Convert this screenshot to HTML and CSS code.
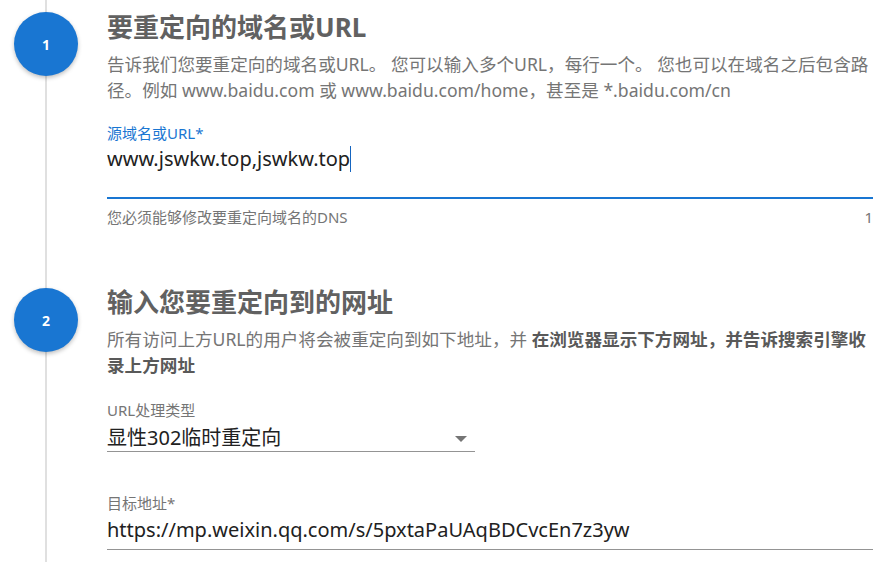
FILE: index.html
```html
<!DOCTYPE html>
<html>
<head>
  <meta charset="UTF-8">
  <title>域名重定向</title>
  <link rel="stylesheet" href="styles.css">
</head>
<body>

  <div class="stepper">

    <!-- Langkah 1 -->
    <div class="step step-first">
      <div class="rail"><div class="step-num">1</div></div>
      <div class="step-body">
        <h2 class="step-title">要重定向的域名或URL</h2>
        <p class="step-desc">告诉我们您要重定向的域名或URL。 您可以输入多个URL，每行一个。 您也可以在域名之后包含路径。例如 www.baidu.com 或 www.baidu.com/home，甚至是 *.baidu.com/cn</p>

        <div class="field field-focus">
          <label class="field-label">源域名或URL*</label>
          <div class="field-input field-area">www.jswkw.top,jswkw.top<span class="caret"></span></div>
        </div>
        <div class="field-hint">
          <span>您必须能够修改要重定向域名的DNS</span>
          <span>1</span>
        </div>
      </div>
    </div>

    <!-- Langkah 2 -->
    <div class="step step-last">
      <div class="rail"><div class="step-num">2</div></div>
      <div class="step-body">
        <h2 class="step-title">输入您要重定向到的网址</h2>
        <p class="step-desc">所有访问上方URL的用户将会被重定向到如下地址，并 <b>在浏览器显示下方网址，并告诉搜索引擎收录上方网址</b></p>

        <div class="field field-select">
          <label class="field-label">URL处理类型</label>
          <div class="field-input">显性302临时重定向<span class="arrow"></span></div>
        </div>

        <div class="field field-target">
          <label class="field-label">目标地址*</label>
          <div class="field-input">https://mp.weixin.qq.com/s/5pxtaPaUAqBDCvcEn7z3yw</div>
        </div>
      </div>
    </div>

  </div>

</body>
</html>
```

FILE: styles.css
```css
body {
  margin: 0;
  background: #fff;
  font-family: "Noto Sans", "Noto Sans CJK SC", sans-serif;
  overflow: hidden;
}

.stepper {
  display: flex;
  flex-direction: column;
  gap: 57px;
}

.step {
  display: flex;
}

.step-first {
  padding-top: 9px;
}

.rail {
  width: 107px;
  flex-shrink: 0;
  display: flex;
  align-items: flex-start;
  background: linear-gradient(#e0e0e0, #e0e0e0) no-repeat 45px 0 / 2px 100%;
  margin-top: -57px;
  padding-top: 61px;
}

.step-first .rail {
  margin-top: -9px;
  padding-top: 12px;
}

.step-num {
  width: 64px;
  height: 64px;
  margin-left: 14px;
  border-radius: 50%;
  background: #1976d2;
  color: #fff;
  font-weight: bold;
  font-size: 14px;
  display: flex;
  align-items: center;
  justify-content: center;
  box-shadow: 0 2px 4px rgba(0,0,0,0.25);
}

.step-body {
  flex: 1;
  padding-right: 22px;
}

.step-last .step-body {
  padding-bottom: 40px;
}

.step-title {
  margin: 0;
  font-size: 26px;
  line-height: 36px;
  font-weight: bold;
  color: #616161;
}

.step-desc {
  margin: 6px 0 0;
  font-size: 17.6px;
  line-height: 26px;
  color: #757575;
}

.step-desc b {
  color: #595959;
}

.field {
  margin-top: 21px;
}

.field-label {
  display: block;
  font-size: 15px;
  line-height: 18px;
  color: #757575;
}

.field-focus .field-label {
  color: #1976d2;
}

.field-input {
  position: relative;
  font-size: 20px;
  line-height: 24px;
  color: #212121;
  padding: 6px 0 7px;
  border-bottom: 1px solid #949494;
}

.field-area {
  box-sizing: border-box;
  height: 57px;
  padding: 4px 0 0;
  border-bottom: 2px solid #1976d2;
}

.caret {
  display: inline-block;
  width: 1px;
  height: 26px;
  background: #1565c0;
  vertical-align: -6px;
}

.field-hint {
  display: flex;
  justify-content: space-between;
  font-size: 15px;
  line-height: 20px;
  color: #757575;
  margin-top: 8px;
}

.field-select {
  width: 368px;
  margin-top: 23px;
}

.field-select .field-input {
  padding: 7px 0 1px;
}

.field-target {
  margin-top: 42px;
}

.arrow {
  position: absolute;
  right: 8px;
  top: 17px;
  border-left: 6px solid transparent;
  border-right: 6px solid transparent;
  border-top: 6px solid #757575;
}
```
